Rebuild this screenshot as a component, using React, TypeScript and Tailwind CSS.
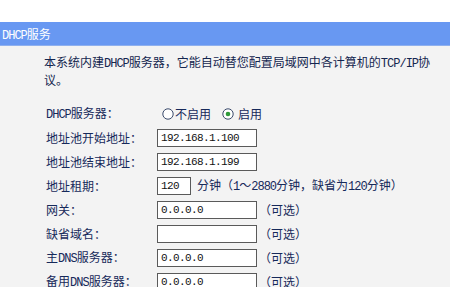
import React from "react";

const font = { fontFamily: '"Noto Sans CJK SC", "Noto Sans", sans-serif' };
const mono = { fontFamily: '"Liberation Mono", "Noto Sans CJK SC", monospace' };

function L({ children }: { children: React.ReactNode }) {
  return (
    <span className="text-[12px] leading-none tracking-[-1px]" style={mono}>
      {children}
    </span>
  );
}

function Radio({ checked }: { checked?: boolean }) {
  return (
    <svg width="12" height="12" viewBox="0 0 12 12" className="shrink-0">
      <circle cx="6" cy="6" r="5.2" fill="white" stroke="#3b4a6b" strokeWidth="1" />
      {checked && <circle cx="6" cy="6" r="2.3" fill="#2f9a3a" />}
    </svg>
  );
}

function Input({ value, w = "w-[100px]" }: { value?: string; w?: string }) {
  return (
    <div
      className={`${w} h-[18px] bg-white border border-[#5a5a5a] flex items-center pl-[3px] text-[11px] tracking-[-0.6px] text-[#111]`}
      style={mono}
    >
      {value}
    </div>
  );
}

function Row({ label, children }: { label: React.ReactNode; children: React.ReactNode }) {
  return (
    <div className="flex items-center h-[24px]">
      <div className="w-[111px] shrink-0 text-[12px] text-[#16295a] leading-none whitespace-nowrap">{label}</div>
      <div className="flex items-center">{children}</div>
    </div>
  );
}

const Opt = () => <span className="ml-[2px] text-[12px] text-[#16295a]">（可选）</span>;

export default function App() {
  return (
    <div className="w-[450px] h-[287px] overflow-hidden bg-white flex flex-col" style={font}>
      <div className="h-[22px] shrink-0 bg-white" />
      <div className="h-[24px] shrink-0 bg-[#6898f2] flex items-center pl-[2px] text-[12px] text-white border-b border-[#8fb0ee]">
        <span>
          <L>DHCP</L>服务
        </span>
      </div>
      <div className="flex-1 bg-[#f3f3f3] pl-[46px] pt-[7px]">
        <div className="text-[12px] leading-[18px] text-[#14264f] whitespace-nowrap -ml-[2px]">
          <div className="h-[18px]">
            本系统内建<L>DHCP</L>服务器，它能自动替您配置局域网中各计算机的<L>TCP/IP</L>协
          </div>
          <div className="h-[18px]">议。</div>
        </div>
        <div className="mt-[13px]">
          <Row label={<><L>DHCP</L>服务器：</>}>
            <div className="flex items-center ml-[5px] text-[12px] text-[#16295a]">
              <Radio />
              <span className="ml-[1px]">不启用</span>
              <span className="ml-[11px] flex items-center">
                <Radio checked />
                <span className="ml-[4px]">启用</span>
              </span>
            </div>
          </Row>
          <Row label="地址池开始地址：">
            <Input value="192.168.1.100" />
          </Row>
          <Row label="地址池结束地址：">
            <Input value="192.168.1.199" />
          </Row>
          <Row label="地址租期：">
            <Input value="120" w="w-[34px]" />
            <span className="ml-[6px] text-[12px] leading-none text-[#16295a]">
              分钟（<L>1</L>～<L>2880</L>分钟，缺省为<L>120</L>分钟）
            </span>
          </Row>
          <Row label="网关：">
            <Input value="0.0.0.0" />
            <Opt />
          </Row>
          <Row label="缺省域名：">
            <Input value="" />
            <Opt />
          </Row>
          <Row label={<>主<L>DNS</L>服务器：</>}>
            <Input value="0.0.0.0" />
            <Opt />
          </Row>
          <Row label={<>备用<L>DNS</L>服务器：</>}>
            <Input value="0.0.0.0" />
            <Opt />
          </Row>
        </div>
      </div>
    </div>
  );
}
